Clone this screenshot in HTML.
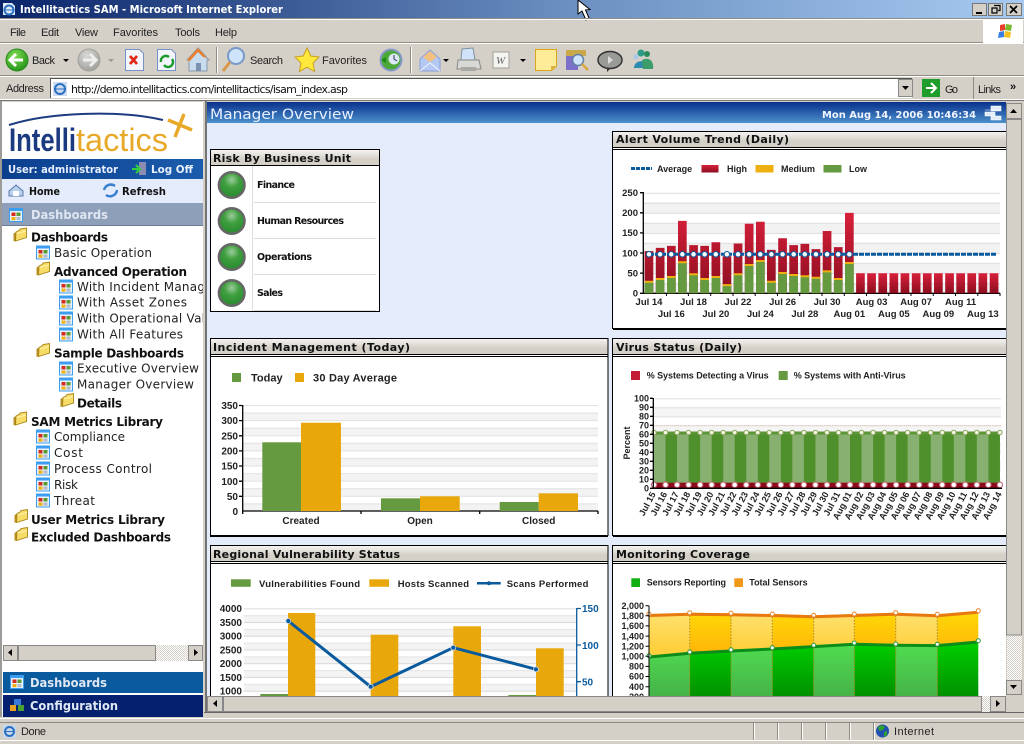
<!DOCTYPE html>
<html><head><meta charset="utf-8"><title>Intellitactics SAM</title>
<style>
html,body{margin:0;padding:0;width:1024px;height:744px;overflow:hidden;background:#d4d0c8}
svg{display:block;position:absolute;left:0;top:0}
text{font-family:"Liberation Sans",sans-serif;white-space:pre}
.ui{font-size:11px;fill:#222}
.v{font-family:"DejaVu Sans",sans-serif;font-size:12px;fill:#222}
.b{font-family:"DejaVu Sans",sans-serif;font-size:12px;font-weight:bold;fill:#111}
.h{font-family:"DejaVu Sans",sans-serif;font-size:11px;font-weight:bold;fill:#111}
.c{font-weight:bold;font-size:10px;fill:#222}
.r{text-anchor:end}
.m{text-anchor:middle}
</style></head><body>
<svg width="1024" height="744" viewBox="0 0 1024 744" xmlns="http://www.w3.org/2000/svg">
<defs>
<linearGradient id="tb"><stop offset="0" stop-color="#0a246a"/><stop offset=".55" stop-color="#6a8fc0"/><stop offset="1" stop-color="#a6caf0"/></linearGradient>
<linearGradient id="mh" x2="0" y2="1"><stop offset="0" stop-color="#08308c"/><stop offset="1" stop-color="#4c90cc"/></linearGradient>
<linearGradient id="ub"><stop offset="0" stop-color="#0b3f8e"/><stop offset="1" stop-color="#1c5cac"/></linearGradient>
<linearGradient id="ph" x2="0" y2="1"><stop offset="0" stop-color="#f4f3f0"/><stop offset=".6" stop-color="#d4d0c8"/><stop offset="1" stop-color="#d4d0c8"/></linearGradient>
<linearGradient id="red" x2="0" y2="1"><stop offset="0" stop-color="#d8203a"/><stop offset="1" stop-color="#8c0e20"/></linearGradient>
<linearGradient id="yl" gradientUnits="userSpaceOnUse" x1="0" y1="612" x2="0" y2="650"><stop offset="0" stop-color="#ffe270"/><stop offset="1" stop-color="#ffcf3c"/></linearGradient>
<linearGradient id="yd" gradientUnits="userSpaceOnUse" x1="0" y1="612" x2="0" y2="650"><stop offset="0" stop-color="#ffd808"/><stop offset="1" stop-color="#ffb808"/></linearGradient>
<linearGradient id="gl" gradientUnits="userSpaceOnUse" x1="0" y1="645" x2="0" y2="700"><stop offset="0" stop-color="#50dc50"/><stop offset="1" stop-color="#45b048"/></linearGradient>
<linearGradient id="gd" gradientUnits="userSpaceOnUse" x1="0" y1="645" x2="0" y2="700"><stop offset="0" stop-color="#00cc00"/><stop offset="1" stop-color="#008c00"/></linearGradient>
<radialGradient id="led" cx=".5" cy=".3" r=".65"><stop offset="0" stop-color="#9ccc9c"/><stop offset=".45" stop-color="#3f9f3f"/><stop offset="1" stop-color="#2a8c30"/></radialGradient>
<radialGradient id="backg" cx=".4" cy=".3" r=".8"><stop offset="0" stop-color="#7fdc50"/><stop offset="1" stop-color="#1c8c14"/></radialGradient>
<radialGradient id="fwd" cx=".4" cy=".3" r=".8"><stop offset="0" stop-color="#d8d8d4"/><stop offset="1" stop-color="#9a9a96"/></radialGradient>
<pattern id="gA" patternUnits="userSpaceOnUse" x="0" y="192.7" width="10" height="20.1"><rect width="10" height="20.1" fill="#fff"/><rect y="10" width="10" height="10.1" fill="#f2f2f2"/><rect width="10" height="1" fill="#dcdcdc"/><rect y="10" width="10" height="1" fill="#dcdcdc"/></pattern>
<pattern id="gI" patternUnits="userSpaceOnUse" x="0" y="405" width="10" height="15.14"><rect width="10" height="15.14" fill="#fff"/><rect y="7.57" width="10" height="7.57" fill="#f3f3f3"/><rect width="10" height="1" fill="#e2e2e2"/><rect y="7.57" width="10" height="1" fill="#e2e2e2"/></pattern>
<pattern id="gV" patternUnits="userSpaceOnUse" x="0" y="398.3" width="10" height="18"><rect width="10" height="18" fill="#fff"/><rect y="9" width="10" height="9" fill="#f5f5f5"/><rect width="10" height="1" fill="#dedede"/><rect y="9" width="10" height="1" fill="#dedede"/></pattern>
<pattern id="gR" patternUnits="userSpaceOnUse" x="0" y="608.3" width="10" height="13.73"><rect width="10" height="13.73" fill="#fff"/><rect y="6.87" width="10" height="6.86" fill="#f3f3f3"/><rect width="10" height="1" fill="#d8d8d8"/><rect y="6.87" width="10" height="1" fill="#e4e4e4"/></pattern>
<pattern id="chk" patternUnits="userSpaceOnUse" width="2" height="2"><rect width="2" height="2" fill="#fff"/><rect width="1" height="1" fill="#d4d0c8"/><rect x="1" y="1" width="1" height="1" fill="#d4d0c8"/></pattern>
<clipPath id="cs"><rect x="2" y="102" width="201" height="542"/></clipPath>
<clipPath id="cm"><rect x="207" y="102" width="799" height="594"/></clipPath>
<symbol id="di" viewBox="0 0 14 14" overflow="visible"><rect x=".5" y=".5" width="13" height="13" fill="#e8f2ff" stroke="#3c9ef0"/><rect x="1" y="1" width="12" height="2" fill="#3c9ef0"/><rect x="2.5" y="4.5" width="4" height="3.5" fill="#d42a20"/><rect x="7.5" y="4.5" width="4" height="3.5" fill="#5a9a30"/><rect x="2.5" y="9" width="4" height="3.2" fill="#f0b010"/><rect x="7.5" y="9" width="4" height="3.2" fill="#b4bcc8"/></symbol>
<symbol id="fo" viewBox="0 0 14 14" overflow="visible"><path d="M.5 5.500 L3 4 V12.500 L.5 13.500 Z" fill="#b89020"/><path d="M3 4 L6 2.500 L7 1 L13.500 0 V9.500 L2.500 13 Z" fill="#f8dc68" stroke="#a88418" stroke-width=".9"/><path d="M3.500 5.500 L13 3" stroke="#fff2b0"/></symbol>
</defs>

<!-- Window chrome -->
<rect width="1024" height="744" fill="#d4d0c8"/>
<rect width="1024" height="18" fill="url(#tb)"/>
<path d="M3 3h9l3 3v9H3z" fill="#dfe9f8"/><circle cx="9" cy="10" r="4.500" fill="none" stroke="#2a6fc0" stroke-width="2"/><path d="M5 10h8" stroke="#2a6fc0"/>
<text x="20" y="13" textLength="263" lengthAdjust="spacingAndGlyphs" style="font-family:'DejaVu Sans',sans-serif;font-size:11px;font-weight:bold;fill:#fff">Intellitactics SAM - Microsoft Internet Explorer</text>
<path d="M578 0 L578 14 L582 11 L586 20 L589 18 L585.500 10 L590 9.500 Z" fill="#fff" stroke="#000"/>
<g fill="#d4d0c8" stroke="#777" stroke-width="1"><rect x="972.500" y="3.500" width="14" height="12"/><rect x="988.500" y="3.500" width="14" height="12"/><rect x="1006.500" y="3.500" width="15" height="12"/></g>
<rect x="976" y="12" width="6" height="2" fill="#000"/>
<path d="M994 5.500h6v5h-2M992 8h5v5h-5z" fill="none" stroke="#000" stroke-width="1.200"/>
<path d="M1010 6l7 7M1017 6l-7 7" stroke="#000" stroke-width="1.800"/>

<path d="M0 19.500H1024M0 43.500H1024M0 76.500H1024" stroke="#fff"/>
<path d="M0 18.500H1024M0 42.500H1024M0 75.500H1024" stroke="#8f8c84"/>
<text class="ui" x="10" y="36" textLength="16">File</text><text class="ui" x="41" y="36" textLength="18">Edit</text><text class="ui" x="75" y="36" textLength="23">View</text><text class="ui" x="113" y="36" textLength="45">Favorites</text><text class="ui" x="175" y="36" textLength="25">Tools</text><text class="ui" x="215" y="36" textLength="22">Help</text>
<rect x="983" y="20" width="40" height="23" fill="#fff"/>
<path d="M1000 25l5-1v6l-5 1z" fill="#e8402a"/><path d="M1006 24l6 1-1 6-6-1z" fill="#7ab82c"/><path d="M999 32l5-1v6l-6 1z" fill="#3a7fe0"/><path d="M1005 31l6 1-1 6-6-1z" fill="#f4c020"/>

<!-- Toolbar -->
<circle cx="17" cy="60" r="11" fill="url(#backg)" stroke="#2a8a1e"/><path d="M23 60H11M16 54l-6 6 6 6" fill="none" stroke="#fff" stroke-width="3"/>
<text class="ui" x="32" y="64" textLength="23">Back</text><path d="M63 59h6l-3 3z" fill="#000"/>
<circle cx="89" cy="60" r="11" fill="url(#fwd)" stroke="#a0a09c"/><path d="M83 60h12M90 54l6 6-6 6" fill="none" stroke="#eee" stroke-width="3"/>
<path d="M108 59h6l-3 3z" fill="#999"/>
<path d="M125.500 49.500h14l4 4v17h-18z" fill="#f2f5fc" stroke="#7890c8"/><path d="M130 56l7 8M137 56l-7 8" stroke="#e02818" stroke-width="2.800"/>
<path d="M157.500 49.500h14l4 4v17h-18z" fill="#f2f5fc" stroke="#7890c8"/><path d="M161 62a5 5 0 0 1 8-5M172 59a5 5 0 0 1-8 6" fill="none" stroke="#1c9c2c" stroke-width="2.500"/>
<path d="M187 60l11-12 11 12h-2v11h-18V60z" fill="#c8dcf0" stroke="#8898a8"/><path d="M187 60l11-12 9 10-4-1-5-5-8 9z" fill="#e88030"/><rect x="196" y="63" width="5" height="8" fill="#7a92b0"/>
<rect x="216" y="47" width="1" height="26" fill="#8f8c84"/><rect x="217" y="47" width="1" height="26" fill="#fff"/>
<circle cx="236" cy="56" r="8" fill="#cfe4fa" stroke="#7898c8" stroke-width="2"/><path d="M230 62l-7 9" stroke="#d89848" stroke-width="3"/>
<text class="ui" x="250" y="64" textLength="33">Search</text>
<path d="M307 48l3.700 8 8.300 1-6 6 1.600 8.500-7.600-4.300-7.600 4.300 1.600-8.500-6-6 8.300-1z" fill="#ffe83c" stroke="#c8a020"/>
<text class="ui" x="322" y="64" textLength="45">Favorites</text>
<circle cx="391" cy="60" r="10.500" fill="#4ca838" stroke="#8898c8" stroke-width="2"/><circle cx="394" cy="59" r="5.500" fill="#dce8f4"/><path d="M394 55v4l3 2" stroke="#335" fill="none"/><path d="M381 60l5-3v6z" fill="#1c8c14"/>
<rect x="410" y="47" width="1" height="26" fill="#8f8c84"/><rect x="411" y="47" width="1" height="26" fill="#fff"/>
<path d="M420 59l10-9 10 9v12h-20z" fill="#b4c8f4" stroke="#8ca0d8"/><path d="M423 57l7-6 7 6-7 5z" fill="#f4c080"/><path d="M420 71l10-8 10 8" fill="none" stroke="#f0f4ff"/>
<path d="M443 59h6l-3 3z" fill="#000"/>
<path d="M462 49l11-1 2 12h-14z" fill="#cfe2f8" stroke="#8090a0"/><path d="M458 60h21l2 9h-24z" fill="#d8d8d4" stroke="#888"/><rect x="461" y="67" width="15" height="4" fill="#a8a8a4"/>
<rect x="493" y="52" width="16" height="16" fill="#f4f4f0" stroke="#a0a098"/><text x="496" y="64" style="font-size:11px;font-style:italic;font-family:'Liberation Serif',serif;fill:#666">W</text>
<path d="M520 59h6l-3 3z" fill="#000"/>
<path d="M535.500 49.500h21v17l-5 4h-16z" fill="#ffec98" stroke="#d8a818"/><path d="M551 70v-4h5z" fill="#d8b040"/>
<rect x="566" y="50" width="12" height="20" fill="#7c70c8"/><path d="M566 50h20v6h-20z" fill="#c8a848"/><circle cx="578" cy="60" r="5.500" fill="#cfe4fa" stroke="#6080a8" stroke-width="1.500"/><path d="M582 64l6 6" stroke="#d8a838" stroke-width="2.500"/>
<ellipse cx="610" cy="60" rx="12" ry="8.500" fill="#9a9a96" stroke="#333" stroke-width="1.500"/><path d="M607 68v4l4-4z" fill="#333"/><path d="M608 56l5 4-5 4z" fill="#ddd"/>
<circle cx="641" cy="53" r="3.500" fill="#2c9c88"/><path d="M634 68c0-9 14-9 14 0z" fill="#2c8cb0"/><circle cx="647" cy="54" r="3" fill="#2a8c58"/><path d="M642 60c8-4 12 2 11 9h-10z" fill="#3c9c6a"/><circle cx="636" cy="57" r="2.500" fill="#a8c8e8"/>

<!-- Address bar -->
<text class="ui" x="6" y="92" textLength="38">Address</text>
<rect x="50" y="78" width="862" height="20" fill="#fff"/>
<path d="M50 78.500H912M50.500 78V98" stroke="#555"/>
<path d="M53 82h14v14H53z" fill="#b8cdea" opacity=".7"/><circle cx="60" cy="89" r="5" fill="none" stroke="#2a6fc0" stroke-width="2"/><path d="M56 89h8" stroke="#2a6fc0"/>
<text x="71" y="93" textLength="277" style="font-size:11px;font-family:'DejaVu Sans',sans-serif;fill:#111">http://demo.intellitactics.com/intellitactics/isam_index.asp</text>
<rect x="898.500" y="79.500" width="14" height="17" fill="#d4d0c8" stroke="#888"/><path d="M902 86h7l-3.500 4z" fill="#000"/>
<rect x="922" y="79" width="18" height="18" fill="#1e9c2c"/><path d="M926 88h9M931 83l5 5-5 5" fill="none" stroke="#fff" stroke-width="2"/>
<text class="ui" x="945" y="93" textLength="13">Go</text>
<rect x="973" y="77" width="1" height="22" fill="#8f8c84"/>
<text class="ui" x="978" y="93" textLength="23">Links</text>
<text x="1010" y="90" style="font-size:11px;font-weight:bold;fill:#111">»</text>
<path d="M0 99.500H1024" stroke="#fff"/><path d="M0 100.500H1024" stroke="#777"/>

<!-- Sidebar -->
<rect x="2" y="102" width="201" height="615" fill="#fff"/>
<path d="M1 101V717" stroke="#666"/>
<path d="M9 125C50 112 120 110 163 120" fill="none" stroke="#1c3c80" stroke-width="2"/>
<text x="9" y="151" textLength="67" lengthAdjust="spacingAndGlyphs" style="font-size:32px;font-weight:bold;fill:#1c3a80">Intelli</text>
<text x="76" y="151" textLength="92" lengthAdjust="spacingAndGlyphs" style="font-size:32px;fill:#e8a828">tactics</text>
<path d="M168 120L192 130M184 114L175 137" stroke="#e8a828" stroke-width="3.500"/>
<rect x="2" y="159" width="201" height="20" fill="url(#ub)"/>
<text x="8" y="173" textLength="110" lengthAdjust="spacingAndGlyphs" style="font-family:'DejaVu Sans',sans-serif;font-size:11px;font-weight:bold;fill:#e8f0ff">User: administrator</text>
<rect x="139" y="162" width="7" height="13" fill="#8c8cb0"/><path d="M132 169h7M136 165l4 4-4 4" fill="none" stroke="#30d040" stroke-width="2"/>
<text x="151" y="173" textLength="42" lengthAdjust="spacingAndGlyphs" style="font-family:'DejaVu Sans',sans-serif;font-size:11px;font-weight:bold;fill:#e8f0ff">Log Off</text>
<rect x="2" y="179" width="201" height="24" fill="#e4ecfb"/>
<path d="M9 191l7-6 7 6v5H9z" fill="#b8d0ec" stroke="#5878a8"/><path d="M13 191h6v5h-6z" fill="#fff"/>
<text x="29" y="195" textLength="31" lengthAdjust="spacingAndGlyphs" style="font-family:'DejaVu Sans',sans-serif;font-size:10.500px;font-weight:bold;fill:#111">Home</text>
<path d="M104 190a7 7 0 0 1 11-4M117 190a7 7 0 0 1-11 5" fill="none" stroke="#3880d0" stroke-width="2.500"/>
<text x="122" y="195" textLength="44" lengthAdjust="spacingAndGlyphs" style="font-family:'DejaVu Sans',sans-serif;font-size:10.500px;font-weight:bold;fill:#111">Refresh</text>
<rect x="2" y="203" width="201" height="23" fill="#8e9fba"/><path d="M2 225.500H203" stroke="#6c7c94"/>
<use href="#di" x="9" y="208" width="14" height="14"/>
<text x="31" y="219" textLength="77" lengthAdjust="spacingAndGlyphs" style="font-family:'DejaVu Sans',sans-serif;font-size:12px;font-weight:bold;fill:#dfe6f2">Dashboards</text>

<g clip-path="url(#cs)">
<use href="#fo" x="13" y="228" width="14" height="14"/><text class="b" x="31" y="241.700" textLength="77">Dashboards</text>
<use href="#di" x="36" y="245.500" width="14" height="14"/><text class="v" x="54" y="257" textLength="98">Basic Operation</text>
<use href="#fo" x="36" y="262" width="14" height="14"/><text class="b" x="54" y="276" textLength="133">Advanced Operation</text>
<use href="#di" x="59" y="279.500" width="14" height="14"/><text class="v" x="77" y="291" textLength="168">With Incident Management</text>
<use href="#di" x="59" y="295.500" width="14" height="14"/><text class="v" x="77" y="306.700" textLength="110">With Asset Zones</text>
<use href="#di" x="59" y="311.500" width="14" height="14"/><text class="v" x="77" y="322.700" textLength="150">With Operational Values</text>
<use href="#di" x="59" y="327.500" width="14" height="14"/><text class="v" x="77" y="338.700" textLength="106">With All Features</text>
<use href="#fo" x="36" y="343.500" width="14" height="14"/><text class="b" x="54" y="357.700" textLength="130">Sample Dashboards</text>
<use href="#di" x="59" y="361.500" width="14" height="14"/><text class="v" x="77" y="372.700" textLength="122">Executive Overview</text>
<use href="#di" x="59" y="377.500" width="14" height="14"/><text class="v" x="77" y="388.700" textLength="117">Manager Overview</text>
<use href="#fo" x="60" y="393.500" width="14" height="14"/><text class="b" x="77" y="407.700" textLength="45">Details</text>
<use href="#fo" x="13" y="412" width="14" height="14"/><text class="b" x="31" y="426" textLength="132">SAM Metrics Library</text>
<use href="#di" x="36" y="429.500" width="14" height="14"/><text class="v" x="54" y="441" textLength="71">Compliance</text>
<use href="#di" x="36" y="445.500" width="14" height="14"/><text class="v" x="54" y="457" textLength="29">Cost</text>
<use href="#di" x="36" y="461.500" width="14" height="14"/><text class="v" x="54" y="473" textLength="98">Process Control</text>
<use href="#di" x="36" y="477.500" width="14" height="14"/><text class="v" x="54" y="489" textLength="24">Risk</text>
<use href="#di" x="36" y="493.500" width="14" height="14"/><text class="v" x="54" y="505" textLength="41">Threat</text>
<use href="#fo" x="14" y="509.500" width="14" height="14"/><text class="b" x="31" y="524" textLength="134">User Metrics Library</text>
<use href="#fo" x="14" y="527.500" width="14" height="14"/><text class="b" x="31" y="541.700" textLength="140">Excluded Dashboards</text>
</g>

<!-- sidebar h scrollbar -->
<rect x="3" y="645" width="199" height="16" fill="url(#chk)"/>
<rect x="3.500" y="645.500" width="14" height="15" fill="#d4d0c8" stroke="#888"/><path d="M12 649v7l-4-3.500z" fill="#000"/>
<rect x="18.500" y="645.500" width="137" height="15" fill="#d4d0c8" stroke="#888"/>
<rect x="188.500" y="645.500" width="14" height="15" fill="#d4d0c8" stroke="#888"/><path d="M194 649v7l4-3.500z" fill="#000"/>

<rect x="3" y="672" width="200" height="21" fill="#0a5a9e"/>
<use href="#di" x="10" y="675" width="14" height="14"/>
<text x="30" y="687" textLength="77" lengthAdjust="spacingAndGlyphs" style="font-family:'DejaVu Sans',sans-serif;font-size:12px;font-weight:bold;fill:#e0e8f4">Dashboards</text>
<rect x="3" y="695" width="200" height="22" fill="#04206e"/>
<rect x="14" y="699" width="7" height="6" fill="#3878d8"/><rect x="10" y="705" width="6" height="6" fill="#e8a020"/><rect x="18" y="705" width="6" height="6" fill="#48a030"/>
<text x="30" y="710" textLength="88" lengthAdjust="spacingAndGlyphs" style="font-family:'DejaVu Sans',sans-serif;font-size:12px;font-weight:bold;fill:#e0e8f4">Configuration</text>

<!-- Main -->
<rect x="203" y="101" width="4" height="616" fill="#d4d0c8"/><path d="M206 101V712" stroke="#555" stroke-width="1.500"/>
<rect x="207" y="102" width="799" height="594" fill="#e4ecfb"/>
<rect x="207" y="102" width="799" height="21" fill="url(#mh)"/>
<text x="210" y="119" textLength="144" lengthAdjust="spacingAndGlyphs" style="font-family:'DejaVu Sans',sans-serif;font-size:14px;fill:#e8f0ff">Manager Overview</text>
<text x="822" y="118" textLength="154" lengthAdjust="spacingAndGlyphs" style="font-family:'DejaVu Sans',sans-serif;font-size:10px;font-weight:bold;fill:#f0f4ff">Mon Aug 14, 2006 10:46:34</text>
<path d="M985 110h16M991 106h10v5h-10zM985 112h10v4h-10zM991 116h10v4h-10z" fill="#e0ecfa" stroke="#fff" stroke-width=".6"/>

<g clip-path="url(#cm)">
<!-- Risk -->
<rect x="210.500" y="149.500" width="169" height="162" fill="#fff" stroke="#000"/>
<rect x="211" y="150" width="168" height="15" fill="url(#ph)"/><path d="M211 165.500H379" stroke="#000"/>
<text class="h" x="213" y="162" textLength="138">Risk By Business Unit</text>
<path d="M252.500 166V311" stroke="#ddd"/><path d="M254 202.500H376M254 238.500H376M254 274.500H376M254 310.500H376" stroke="#ddd"/>
<g stroke="#666" stroke-width="2.500" fill="url(#led)"><circle cx="231.700" cy="185" r="12.800"/><circle cx="231.700" cy="221" r="12.800"/><circle cx="231.700" cy="257" r="12.800"/><circle cx="231.700" cy="293" r="12.800"/></g>
<text x="257" y="188" textLength="38" style="font-family:'DejaVu Sans',sans-serif;font-size:9.500px;font-weight:bold;fill:#111">Finance</text>
<text x="257" y="224" textLength="87" style="font-family:'DejaVu Sans',sans-serif;font-size:9.500px;font-weight:bold;fill:#111">Human Resources</text>
<text x="257" y="260" textLength="55" style="font-family:'DejaVu Sans',sans-serif;font-size:9.500px;font-weight:bold;fill:#111">Operations</text>
<text x="257" y="296" textLength="26" style="font-family:'DejaVu Sans',sans-serif;font-size:9.500px;font-weight:bold;fill:#111">Sales</text>

<!-- Alert panel -->
<rect x="612.500" y="131.500" width="400" height="197" fill="#fff" stroke="#000"/>
<rect x="613" y="132" width="393" height="15" fill="url(#ph)"/>
<path d="M613 147.500H1006M613 149.500H1006" stroke="#000"/>
<rect x="613" y="328" width="393" height="2" fill="#000"/>
<text class="h" x="616" y="143" textLength="173">Alert Volume Trend (Daily)</text>
<path d="M631 168.500h21" stroke="#0a5a9e" stroke-width="3" stroke-dasharray="4 1"/>
<text class="c" x="657" y="172" style="font-size:9px">Average</text>
<rect x="701.500" y="165" width="17" height="7.500" fill="url(#red)"/><text class="c" x="727" y="172" style="font-size:9px">High</text>
<rect x="755.500" y="165" width="18" height="7.500" fill="#eeb010"/><text class="c" x="781" y="172" style="font-size:9px">Medium</text>
<rect x="823.500" y="165" width="18" height="7.500" fill="#669a40"/><text class="c" x="849" y="172" style="font-size:9px">Low</text>
<rect x="644" y="192.700" width="356" height="100.600" fill="url(#gA)"/>
<path d="M643.300 192V294M640 192.700h3M640 212.800h3M640 232.900h3M640 253h3M640 273.100h3M640 293.300H1000" stroke="#000" stroke-width="1.300"/>
<path d="M666.500 293v3M688.400 293v3M710.700 293v3M733 293v3M755.200 293v3M777.500 293v3M799.700 293v3M822 293v3M844.300 293v3M866.500 293v3M888.800 293v3M911 293v3M933.300 293v3M955.500 293v3M977.800 293v3M1000 293v3" stroke="#000"/>
<path d="M644.600 251.100h8.700v42.200h-8.700zM655.800 247.900h8.700v45.400h-8.700zM667 245.900h8.700v47.400H667zM678 220.900h8.700v72.400H678zM689.200 245.100h8.700v48.200h-8.700zM700.300 245.900h8.700v47.400h-8.700zM711.500 242.200h8.700v51.100h-8.700zM722.600 256.300h8.700v37h-8.700zM733.700 243.500h8.700v49.800h-8.700zM744.800 223.800h8.700v69.500h-8.700zM756 221.700h8.700v71.600H756zM767 249.900h8.700v43.400H767zM778.200 238.200h8.700v55.100h-8.700zM789.300 245.100h8.700v48.200h-8.700zM800.500 243.900h8.700v49.400h-8.700zM811.600 249.100h8.700v44.200h-8.700zM822.700 231h8.700v62.300h-8.700zM833.900 247.100h8.700v46.200h-8.700zM845 212.900h8.700v80.400H845z" fill="url(#red)"/>
<path d="M856.100 273.200h8.700v20.100h-8.700zM867.200 273.200h8.700v20.100h-8.700zM878.400 273.200h8.700v20.100h-8.700zM889.500 273.200h8.700v20.100h-8.700zM900.600 273.200h8.700v20.100h-8.700zM911.800 273.200h8.700v20.100h-8.700zM922.900 273.200h8.700v20.100h-8.700zM934 273.200h8.700v20.100H934zM945.200 273.200h8.700v20.100h-8.700zM956.300 273.200h8.700v20.100h-8.700zM967.400 273.200h8.700v20.100h-8.700zM978.500 273.200h8.700v20.100h-8.700zM989.700 273.200h8.700v20.100h-8.700z" fill="url(#red)"/>
<path d="M644.600 280.800h8.700v3h-8.700zM655.800 278h8.700v3h-8.700zM667 276h8.700v3H667zM678 261.200h8.700v3H678zM689.200 273.200h8.700v3h-8.700zM700.300 278h8.700v3h-8.700zM711.500 276h8.700v3h-8.700zM722.600 284.100h8.700v3h-8.700zM733.700 273.200h8.700v3h-8.700zM744.800 264h8.700v3h-8.700zM756 260h8.700v3H756zM767 280.800h8.700v3H767zM778.200 272h8.700v3h-8.700zM789.300 274h8.700v3h-8.700zM800.500 275.200h8.700v3h-8.700zM811.600 276.800h8.700v3h-8.700zM822.700 270.400h8.700v3h-8.700zM833.900 278h8.700v3h-8.700zM845 262h8.700v3H845z" fill="#eeb010"/>
<path d="M644.600 282.800h8.700v10.500h-8.700zM655.800 280h8.700v13.300h-8.700zM667 278h8.700v15.300H667zM678 263.200h8.700v30.100H678zM689.200 275.200h8.700v18.100h-8.700zM700.300 280h8.700v13.300h-8.700zM711.500 278h8.700v15.300h-8.700zM722.600 286.100h8.700v7.200h-8.700zM733.700 275.200h8.700v18.100h-8.700zM744.800 266h8.700v27.300h-8.700zM756 262h8.700v31.300H756zM767 282.800h8.700v10.500H767zM778.200 274h8.700v19.300h-8.700zM789.300 276h8.700v17.300h-8.700zM800.500 277.200h8.700v16.100h-8.700zM811.600 278.800h8.700v14.500h-8.700zM822.700 272.400h8.700v20.900h-8.700zM833.900 280h8.700v13.300h-8.700zM845 264h8.700v29.300H845z" fill="#669a40"/>
<path d="M649 254.300H997" stroke="#0a5a9e" stroke-width="3" stroke-dasharray="5 1"/>
<path d="M649 254.300H850" stroke="#0a5a9e" stroke-width="6.500" stroke-linecap="round" stroke-dasharray="0 11.130"/>
<path d="M649 254.300H850" stroke="#fff" stroke-width="4.500" stroke-linecap="round" stroke-dasharray="0 11.130"/>
<text class="c r" x="638" y="196" style="font-size:9.500px">250</text><text class="c r" x="638" y="216" style="font-size:9.500px">200</text><text class="c r" x="638" y="236" style="font-size:9.500px">150</text><text class="c r" x="638" y="256.300" style="font-size:9.500px">100</text><text class="c r" x="638" y="276.400" style="font-size:9.500px">50</text><text class="c r" x="638" y="296.500" style="font-size:9.500px">0</text>
<text class="c m" x="649" y="305" style="font-size:9.500px">Jul 14</text><text class="c m" x="693.500" y="305" style="font-size:9.500px">Jul 18</text><text class="c m" x="738" y="305" style="font-size:9.500px">Jul 22</text><text class="c m" x="782.600" y="305" style="font-size:9.500px">Jul 26</text><text class="c m" x="827.100" y="305" style="font-size:9.500px">Jul 30</text><text class="c m" x="871.600" y="305" style="font-size:9.500px">Aug 03</text><text class="c m" x="916.100" y="305" style="font-size:9.500px">Aug 07</text><text class="c m" x="960.600" y="305" style="font-size:9.500px">Aug 11</text>
<text class="c m" x="671.300" y="317" style="font-size:9.500px">Jul 16</text><text class="c m" x="715.800" y="317" style="font-size:9.500px">Jul 20</text><text class="c m" x="760.300" y="317" style="font-size:9.500px">Jul 24</text><text class="c m" x="804.800" y="317" style="font-size:9.500px">Jul 28</text><text class="c m" x="849.300" y="317" style="font-size:9.500px">Aug 01</text><text class="c m" x="893.900" y="317" style="font-size:9.500px">Aug 05</text><text class="c m" x="938.400" y="317" style="font-size:9.500px">Aug 09</text><text class="c m" x="982.900" y="317" style="font-size:9.500px">Aug 13</text>

<!-- Incident -->
<rect x="210.500" y="338.500" width="397.500" height="197" fill="#fff" stroke="#000"/>
<rect x="211" y="339" width="396.500" height="15" fill="url(#ph)"/>
<path d="M211 354.500H608M211 356.500H608" stroke="#000"/><rect x="210" y="535" width="398" height="2" fill="#000"/>
<text class="h" x="213" y="351" textLength="197">Incident Management (Today)</text>
<rect x="232" y="373" width="9" height="9" fill="#669a40"/><text class="c" x="251" y="381.700" style="font-size:11px">Today</text>
<rect x="295" y="373" width="9" height="9" fill="#e8a80c"/><text class="c" x="313" y="381.700" style="font-size:11px" textLength="84">30 Day Average</text>
<rect x="243" y="405" width="355" height="106" fill="url(#gI)"/>
<path d="M242.700 405V512M239 405.500h3M239 420.600h3M239 435.800h3M239 450.900h3M239 466h3M239 481.200h3M239 496.300h3M242 511H598M242.700 511v3M361 511v3M479.700 511v3M598 511v3" stroke="#000" stroke-width="1.300" fill="none"/>
<rect x="262.300" y="442.300" width="38.700" height="68.700" fill="#669a40"/><rect x="301" y="422.700" width="40" height="88.300" fill="#e8a80c"/>
<rect x="381" y="498.300" width="39" height="12.700" fill="#669a40"/><rect x="420" y="496.300" width="39.700" height="14.700" fill="#e8a80c"/>
<rect x="499.700" y="502" width="39" height="9" fill="#669a40"/><rect x="538.700" y="493.300" width="39.300" height="17.700" fill="#e8a80c"/>
<text class="c r" x="238" y="409">350</text><text class="c r" x="238" y="424">300</text><text class="c r" x="238" y="439.300">250</text><text class="c r" x="238" y="454.500">200</text><text class="c r" x="238" y="469.600">150</text><text class="c r" x="238" y="484.800">100</text><text class="c r" x="238" y="499.900">50</text><text class="c r" x="238" y="515">0</text>
<text class="c m" x="301" y="524">Created</text><text class="c m" x="420" y="524">Open</text><text class="c m" x="538.700" y="524">Closed</text>

<!-- Virus -->
<rect x="612.500" y="338.500" width="400" height="197" fill="#fff" stroke="#000"/>
<rect x="613" y="339" width="393" height="15" fill="url(#ph)"/>
<path d="M613 354.500H1006M613 356.500H1006" stroke="#000"/><rect x="613" y="535" width="393" height="2" fill="#000"/>
<text class="h" x="616" y="351" textLength="126">Virus Status (Daily)</text>
<rect x="631" y="371" width="9" height="9" fill="#c41a34"/><text class="c" x="646.700" y="378.500" style="font-size:9px" textLength="122">% Systems Detecting a Virus</text>
<rect x="778.700" y="371" width="9" height="9" fill="#669a40"/><text class="c" x="793.700" y="378.500" style="font-size:9px" textLength="112">% Systems with Anti-Virus</text>
<rect x="654" y="398.300" width="347" height="90" fill="url(#gV)"/>
<path d="M654 425.500H1001" stroke="#e8c8b8" stroke-dasharray="1 1"/>
<rect x="654" y="431.500" width="346" height="52" fill="#88b070"/>
<path d="M665.500 431.500h11.530v52h-11.530zM688.600 431.500h11.530v52h-11.530zM711.700 431.500h11.530v52h-11.530zM734.700 431.500h11.530v52h-11.530zM757.800 431.500h11.530v52h-11.530zM780.800 431.500h11.530v52h-11.530zM803.900 431.500h11.530v52h-11.530zM827 431.500h11.530v52H827zM850 431.500h11.530v52H850zM873.100 431.500h11.530v52h-11.530zM896.100 431.500h11.530v52h-11.530zM919.200 431.500h11.530v52h-11.530zM942.300 431.500h11.530v52h-11.530zM965.300 431.500h11.530v52h-11.530zM988.400 431.500h11.530v52h-11.530z" fill="#50902c"/>
<rect x="654" y="431.500" width="346" height="3" fill="#5c9438"/>
<rect x="654" y="482.700" width="346" height="5.600" fill="#8c0a1c"/>
<path d="M654 432.500H1001" stroke="#8ca858" stroke-width="5.500" stroke-linecap="round" stroke-dasharray="0 11.530"/>
<path d="M654 432.500H1001" stroke="#f4f4e8" stroke-width="3.500" stroke-linecap="round" stroke-dasharray="0 11.530"/>
<path d="M654 484.800H1001" stroke="#c8687a" stroke-width="6.500" stroke-linecap="round" stroke-dasharray="0 11.530"/>
<path d="M654 484.800H1001" stroke="#fff" stroke-width="4.300" stroke-linecap="round" stroke-dasharray="0 11.530"/>
<path d="M653.300 398V489M650 398.300h3M650 407.300h3M650 416.300h3M650 425.300h3M650 434.300h3M650 443.300h3M650 452.300h3M650 461.300h3M650 470.300h3M650 479.300h3M650 488.300H1002" stroke="#000" stroke-width="1.300" fill="none"/>
<text class="c r" x="649" y="401.500" style="font-size:9px">100</text><text class="c r" x="649" y="410.500" style="font-size:9px">90</text><text class="c r" x="649" y="419.500" style="font-size:9px">80</text><text class="c r" x="649" y="428.500" style="font-size:9px">70</text><text class="c r" x="649" y="437.500" style="font-size:9px">60</text><text class="c r" x="649" y="446.500" style="font-size:9px">50</text><text class="c r" x="649" y="455.500" style="font-size:9px">40</text><text class="c r" x="649" y="464.500" style="font-size:9px">30</text><text class="c r" x="649" y="473.500" style="font-size:9px">20</text><text class="c r" x="649" y="482.500" style="font-size:9px">10</text><text class="c r" x="649" y="491.500" style="font-size:9px">0</text>
<text class="c m" transform="translate(630 443) rotate(-90)" style="font-size:9px">Percent</text>
<text class="c r" style="font-size:9px" transform="translate(656 494) rotate(-62)">Jul 15</text>
<text class="c r" style="font-size:9px" transform="translate(667.500 494) rotate(-62)">Jul 16</text>
<text class="c r" style="font-size:9px" transform="translate(679.100 494) rotate(-62)">Jul 17</text>
<text class="c r" style="font-size:9px" transform="translate(690.600 494) rotate(-62)">Jul 18</text>
<text class="c r" style="font-size:9px" transform="translate(702.100 494) rotate(-62)">Jul 19</text>
<text class="c r" style="font-size:9px" transform="translate(713.700 494) rotate(-62)">Jul 20</text>
<text class="c r" style="font-size:9px" transform="translate(725.200 494) rotate(-62)">Jul 21</text>
<text class="c r" style="font-size:9px" transform="translate(736.700 494) rotate(-62)">Jul 22</text>
<text class="c r" style="font-size:9px" transform="translate(748.300 494) rotate(-62)">Jul 23</text>
<text class="c r" style="font-size:9px" transform="translate(759.800 494) rotate(-62)">Jul 24</text>
<text class="c r" style="font-size:9px" transform="translate(771.300 494) rotate(-62)">Jul 25</text>
<text class="c r" style="font-size:9px" transform="translate(782.800 494) rotate(-62)">Jul 26</text>
<text class="c r" style="font-size:9px" transform="translate(794.400 494) rotate(-62)">Jul 27</text>
<text class="c r" style="font-size:9px" transform="translate(805.900 494) rotate(-62)">Jul 28</text>
<text class="c r" style="font-size:9px" transform="translate(817.400 494) rotate(-62)">Jul 29</text>
<text class="c r" style="font-size:9px" transform="translate(829 494) rotate(-62)">Jul 30</text>
<text class="c r" style="font-size:9px" transform="translate(840.500 494) rotate(-62)">Jul 31</text>
<text class="c r" style="font-size:9px" transform="translate(852 494) rotate(-62)">Aug 01</text>
<text class="c r" style="font-size:9px" transform="translate(863.600 494) rotate(-62)">Aug 02</text>
<text class="c r" style="font-size:9px" transform="translate(875.100 494) rotate(-62)">Aug 03</text>
<text class="c r" style="font-size:9px" transform="translate(886.600 494) rotate(-62)">Aug 04</text>
<text class="c r" style="font-size:9px" transform="translate(898.100 494) rotate(-62)">Aug 05</text>
<text class="c r" style="font-size:9px" transform="translate(909.700 494) rotate(-62)">Aug 06</text>
<text class="c r" style="font-size:9px" transform="translate(921.200 494) rotate(-62)">Aug 07</text>
<text class="c r" style="font-size:9px" transform="translate(932.700 494) rotate(-62)">Aug 08</text>
<text class="c r" style="font-size:9px" transform="translate(944.300 494) rotate(-62)">Aug 09</text>
<text class="c r" style="font-size:9px" transform="translate(955.800 494) rotate(-62)">Aug 10</text>
<text class="c r" style="font-size:9px" transform="translate(967.300 494) rotate(-62)">Aug 11</text>
<text class="c r" style="font-size:9px" transform="translate(978.900 494) rotate(-62)">Aug 12</text>
<text class="c r" style="font-size:9px" transform="translate(990.400 494) rotate(-62)">Aug 13</text>
<text class="c r" style="font-size:9px" transform="translate(1002 494) rotate(-62)">Aug 14</text>

<!-- Regional -->
<rect x="210.500" y="545.500" width="397.500" height="170" fill="#fff" stroke="#000"/>
<rect x="211" y="546" width="396.500" height="15" fill="url(#ph)"/>
<path d="M211 561.500H608M211 563.500H608" stroke="#000"/>
<text class="h" x="213" y="558" textLength="187">Regional Vulnerability Status</text>
<rect x="231" y="579.300" width="19.700" height="7.500" fill="#669a40"/><text class="c" x="259" y="587" style="font-size:9.500px" textLength="101">Vulnerabilities Found</text>
<rect x="369.300" y="579.300" width="19.700" height="7.500" fill="#e8a80c"/><text class="c" x="397.700" y="587" style="font-size:9.500px" textLength="71.300">Hosts Scanned</text>
<path d="M477 583.300H500.700" stroke="#0a5a9e" stroke-width="2.500"/><circle cx="489" cy="583.300" r="2" fill="#0a5a9e"/><text class="c" x="506.700" y="587" style="font-size:9.500px" textLength="81.700">Scans Performed</text>
<rect x="244" y="608.300" width="332.700" height="90" fill="url(#gR)"/>
<rect x="288" y="613" width="27.300" height="85" fill="#e8a80c"/><rect x="370.700" y="634.700" width="27.600" height="65" fill="#e8a80c"/><rect x="453.300" y="626.300" width="27.700" height="72" fill="#e8a80c"/><rect x="536" y="648.300" width="27.700" height="52" fill="#e8a80c"/>
<rect x="260.300" y="694" width="27.700" height="6" fill="#669a40"/><rect x="508.300" y="695" width="27.700" height="5" fill="#669a40"/>
<path d="M288.300 621L370.700 686.700L453.300 647.700L536 669.300" fill="none" stroke="#0a5a9e" stroke-width="3"/>
<g fill="#0a5a9e" stroke="#cde" stroke-width=".8"><circle cx="288.300" cy="621" r="2.500"/><circle cx="370.700" cy="686.700" r="2.500"/><circle cx="453.300" cy="647.700" r="2.500"/><circle cx="536" cy="669.300" r="2.500"/></g>
<text class="c r" x="242" y="612">4000</text><text class="c r" x="242" y="626">3500</text><text class="c r" x="242" y="639.700">3000</text><text class="c r" x="242" y="653.400">2500</text><text class="c r" x="242" y="667">2000</text><text class="c r" x="242" y="680.800">1500</text><text class="c r" x="242" y="694.500">1000</text>
<path d="M576.700 608V700M577 608.500h4M577 645h4M577 681.700h4" stroke="#0a5a9e" stroke-width="1.300" fill="none"/>
<text class="c" x="582" y="612" style="fill:#0a5a9e">150</text><text class="c" x="582" y="649" style="fill:#0a5a9e">100</text><text class="c" x="582" y="685.500" style="fill:#0a5a9e">50</text>

<!-- Monitoring -->
<rect x="612.500" y="545.500" width="400" height="170" fill="#fff" stroke="#000"/>
<rect x="613" y="546" width="393" height="15" fill="url(#ph)"/>
<path d="M613 561.500H1006M613 563.500H1006" stroke="#000"/>
<text class="h" x="616" y="558" textLength="134">Monitoring Coverage</text>
<rect x="631.300" y="578.300" width="8.700" height="8.700" fill="#10b010"/><text class="c" x="646.700" y="585.500" style="font-size:9px" textLength="79.300">Sensors Reporting</text>
<rect x="734.300" y="578.300" width="8.700" height="8.700" fill="#f09818"/><text class="c" x="749.300" y="585.500" style="font-size:9px" textLength="58.300">Total Sensors</text>
<path d="M649 614L689.700 612.700V652L649 655.700Z M731 613.300L772.300 614V647.700L731 649.700Z M813.700 615.300L854.300 614V643L813.700 645.300Z M895.700 612.700L937.300 614.300V644.300L895.700 644Z" fill="url(#yl)"/>
<path d="M689.700 612.700L731 613.300V649.700L689.700 652Z M772.300 614L813.700 615.300V645.300L772.300 647.700Z M854.300 614L895.700 612.700V644L854.300 643Z M937.300 614.300L978.300 610.700V640.700L937.300 644.300Z" fill="url(#yd)"/>
<path d="M649 655.700L689.700 652V700H649Z M731 649.700L772.300 647.700V700H731Z M813.700 645.300L854.300 643V700H813.700Z M895.700 644L937.300 644.300V700H895.700Z" fill="url(#gl)"/>
<path d="M689.700 652L731 649.700V700H689.700Z M772.300 647.700L813.700 645.300V700H772.300Z M854.300 643L895.700 644V700H854.300Z M937.300 644.300L978.300 640.700V700H937.300Z" fill="url(#gd)"/>
<path d="M649 615.500L689.700 614.200L731 614.800L772.300 615.500L813.700 616.800L854.300 615.500L895.700 614.200L937.300 615.800L978.300 612.200" fill="none" stroke="#e87810" stroke-width="3"/>
<path d="M649 657L689.700 653.300L731 651L772.300 649L813.700 646.600L854.300 644.300L895.700 645.300L937.300 645.600L978.300 642" fill="none" stroke="#0c8c18" stroke-width="3"/>
<path d="M689.700 612.700V696M731 613.300V696M772.300 614V696M813.700 615.300V696M854.300 614V696M895.700 612.700V696M937.300 614.300V696" stroke="#a88820" stroke-dasharray="1.500 1.500"/>
<g fill="#fff" stroke="#e88830" stroke-width="1"><circle cx="649" cy="614" r="2"/><circle cx="689.700" cy="612.700" r="2"/><circle cx="731" cy="613.300" r="2"/><circle cx="772.300" cy="614" r="2"/><circle cx="813.700" cy="615.300" r="2"/><circle cx="854.300" cy="614" r="2"/><circle cx="895.700" cy="612.700" r="2"/><circle cx="937.300" cy="614.300" r="2"/><circle cx="978.300" cy="610.700" r="2"/></g>
<g fill="#fff" stroke="#30a040" stroke-width="1"><circle cx="649" cy="655.700" r="2"/><circle cx="689.700" cy="652" r="2"/><circle cx="731" cy="649.700" r="2"/><circle cx="772.300" cy="647.700" r="2"/><circle cx="813.700" cy="645.300" r="2"/><circle cx="854.300" cy="643" r="2"/><circle cx="895.700" cy="644" r="2"/><circle cx="937.300" cy="644.300" r="2"/><circle cx="978.300" cy="640.700" r="2"/></g>
<path d="M649 605.500V700M645.500 605.700h3M645.500 615.800h3M645.500 625.900h3M645.500 636.100h3M645.500 646.200h3M645.500 656.300h3M645.500 666.400h3M645.500 676.500h3M645.500 686.700h3M645.500 696.800h3" stroke="#000" fill="none"/>
<text class="c r" x="644" y="609" style="font-size:9px">2,000</text><text class="c r" x="644" y="619" style="font-size:9px">1,800</text><text class="c r" x="644" y="629.100" style="font-size:9px">1,600</text><text class="c r" x="644" y="639.300" style="font-size:9px">1,400</text><text class="c r" x="644" y="649.400" style="font-size:9px">1,200</text><text class="c r" x="644" y="659.500" style="font-size:9px">1,000</text><text class="c r" x="644" y="669.600" style="font-size:9px">800</text><text class="c r" x="644" y="679.700" style="font-size:9px">600</text><text class="c r" x="644" y="689.900" style="font-size:9px">400</text><text class="c r" x="644" y="700" style="font-size:9px">200</text>
</g>

<!-- Main scrollbars -->
<rect x="1006" y="102" width="18" height="615" fill="#d4d0c8"/>
<rect x="1007" y="103" width="15" height="592" fill="url(#chk)"/>
<rect x="1006.500" y="103.500" width="15" height="15" fill="#d4d0c8" stroke="#888"/><path d="M1010 113h7l-3.500-4z" fill="#000"/>
<rect x="1006.500" y="119.500" width="15" height="515.500" fill="#d4d0c8" stroke="#888"/>
<rect x="1006.500" y="680.500" width="15" height="14" fill="#d4d0c8" stroke="#888"/><path d="M1010 685h7l-3.500 4z" fill="#000"/>
<rect x="207" y="696" width="799" height="16" fill="#d4d0c8"/>
<rect x="982" y="696" width="8" height="16" fill="url(#chk)"/>
<rect x="207.500" y="696.500" width="15" height="15" fill="#d4d0c8" stroke="#888"/><path d="M217 700v7l-4-3.500z" fill="#000"/>
<rect x="223.500" y="696.500" width="758" height="15" fill="#d4d0c8" stroke="#888"/>
<rect x="990.500" y="696.500" width="15" height="15" fill="#d4d0c8" stroke="#888"/><path d="M996 700v7l4-3.500z" fill="#000"/>
<path d="M204 712.500H1024" stroke="#666"/>
<rect x="0" y="717" width="1024" height="27" fill="#d4d0c8"/>
<path d="M0 718.500H1024" stroke="#fff"/><path d="M0 722.500H1024" stroke="#888"/><path d="M0 740.500H1024" stroke="#fff"/>

<!-- Status bar -->
<path d="M3 725h13v13H3z" fill="#c8d8ec"/><circle cx="9.500" cy="731.500" r="4.500" fill="none" stroke="#2a6fc0" stroke-width="2"/><path d="M5 731.500h9" stroke="#2a6fc0"/>
<text class="ui" x="21" y="735" textLength="25">Done</text>
<path d="M753.500 723V740M777.500 723V740M801.500 723V740M825.500 723V740M849.500 723V740M873.500 723V740" stroke="#8f8c84"/>
<path d="M754.500 723V740M778.500 723V740M802.500 723V740M826.500 723V740M850.500 723V740M874.500 723V740" stroke="#fff"/>
<circle cx="882.500" cy="731" r="6.500" fill="#2050b0"/><path d="M878 727l4-2 3 2-2 3-4 1zM884 732l3-1 0 4-3 2z" fill="#30a030"/>
<text class="ui" x="894" y="735" textLength="40">Internet</text>
</svg>
</body></html>
